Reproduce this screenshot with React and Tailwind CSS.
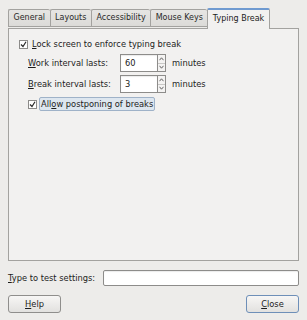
import React from 'react'

const font = { fontFamily: '"DejaVu Sans", "Liberation Sans", sans-serif' }

function Check({ checked }) {
    return (
        <span className='w-[9px] h-[9px] border border-[#8c8b89] bg-white flex items-center justify-center shrink-0'>
            {checked && (
                <svg width="7" height="7" viewBox="0 0 7 7">
                    <path d="M1 3.5 L3 5.5 L6 0.8" fill="none" stroke="#2a2a2a" strokeWidth="1.2" />
                </svg>
            )}
        </span>
    )
}

function Spin({ value }) {
    return (
        <div className='flex h-[18px]'>
            <div className='w-[37px] h-full bg-white border border-[#8d8c8a] border-r-0 flex items-center pl-[4px] text-[#1c1c1c] shadow-[inset_0_1px_1px_rgba(0,0,0,0.08)]'>
                {value}
            </div>
            <div className='w-[9px] h-full border border-[#8d8c8a] bg-[#f4f3f2] flex flex-col'>
                <div className='flex-1 flex items-center justify-center border-b border-[#c9c8c6]'>
                    <svg width="5" height="4" viewBox="0 0 5 4"><path d="M0.5 3.2 L2.5 0.8 L4.5 3.2" fill="none" stroke="#555" strokeWidth="0.9" /></svg>
                </div>
                <div className='flex-1 flex items-center justify-center'>
                    <svg width="5" height="4" viewBox="0 0 5 4"><path d="M0.5 0.8 L2.5 3.2 L4.5 0.8" fill="none" stroke="#555" strokeWidth="0.9" /></svg>
                </div>
            </div>
        </div>
    )
}

export default function App() {
    const tabs = ['General', 'Layouts', 'Accessibility', 'Mouse Keys']
    return (
        <div style={font} className='w-[307px] h-[320px] bg-[#edecea] text-[8.3px] text-[#1c1c1c] px-[8px] pt-[7px] flex flex-col'>
            {/* tabs */}
            <div className='flex items-end h-[21px] relative z-10 text-[8px]'>
                {tabs.map((t) => (
                    <div key={t} className='h-[18px] mb-px px-[4.5px] flex items-center border border-r-0 border-[#a3a29f] rounded-t-[2px] bg-gradient-to-b from-[#e6e5e3] to-[#dcdbd8] text-[#2a2a2a]'>
                        {t}
                    </div>
                ))}
                <div className='h-[21px] px-[4.5px] flex items-center border border-b-0 border-[#a3a29f] border-t-[#6f9ad0] border-t-2 rounded-t-[2px] bg-[#f2f1f0] -mb-px pb-px'>
                    Typing Break
                </div>
            </div>

            {/* panel */}
            <div className='h-[233px] border border-[#a3a29f] bg-[#f2f1f0] pt-[9px] pl-[10px] flex flex-col'>
                <div className='flex items-center h-[12px] gap-[4px]'>
                    <Check checked />
                    <span><span className='underline'>L</span>ock screen to enforce typing break</span>
                </div>
                <div className='pl-[9px] flex flex-col'>
                    <div className='flex items-center mt-[4px] h-[18px]'>
                        <span className='w-[92px]'><span className='underline'>W</span>ork interval lasts:</span>
                        <Spin value="60" />
                        <span className='ml-[6px]'>minutes</span>
                    </div>
                    <div className='flex items-center mt-[3px] h-[18px]'>
                        <span className='w-[92px]'><span className='underline'>B</span>reak interval lasts:</span>
                        <Spin value="3" />
                        <span className='ml-[6px]'>minutes</span>
                    </div>
                    <div className='flex items-center mt-[4px] h-[14px] gap-[2px]'>
                        <Check checked />
                        <span className='h-[14px] px-[1px] flex items-center border border-[#9fb2c8] rounded-[2px] bg-[#dde6ef]'>
                            All<span className='underline'>o</span>w postponing of breaks
                        </span>
                    </div>
                </div>
            </div>

            {/* test field */}
            <div className='flex items-center mt-[9px] h-[16px]'>
                <span className='w-[95px]'><span className='underline'>T</span>ype to test settings:</span>
                <div className='flex-1 h-[16px] bg-white border border-[#8d8c8a] rounded-[2px] shadow-[inset_0_1px_1px_rgba(0,0,0,0.08)]' />
            </div>

            {/* buttons */}
            <div className='flex justify-between mt-[9px]'>
                <button className='w-[53px] h-[18px] rounded-[3px] border border-[#8f8e8c] bg-gradient-to-b from-[#f7f6f5] to-[#e2e1df] text-[8.3px]'>
                    <span className='underline'>H</span>elp
                </button>
                <button className='w-[53px] h-[18px] rounded-[3px] border border-[#6e8fb8] bg-gradient-to-b from-[#f7f6f5] to-[#e2e1df] text-[8.3px]'>
                    <span className='underline'>C</span>lose
                </button>
            </div>
        </div>
    )
}
